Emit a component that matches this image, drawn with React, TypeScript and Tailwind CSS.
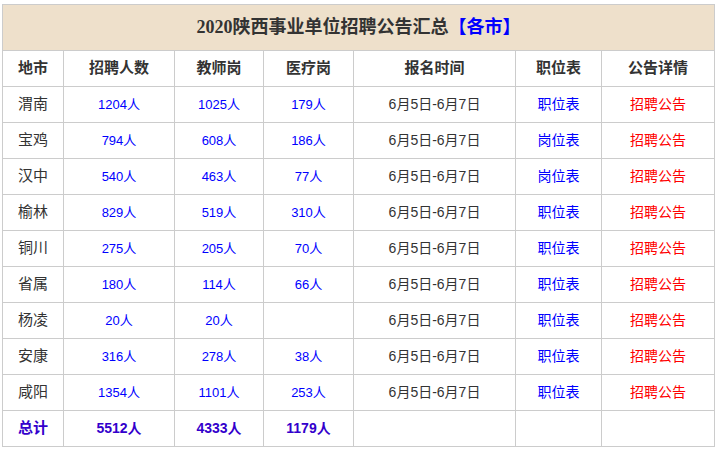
import React from 'react'

type Row = {
  city: string
  total: string
  teacher: string
  medical: string
  table: string
}

const rows: Row[] = [
  { city: '渭南', total: '1204人', teacher: '1025人', medical: '179人', table: '职位表' },
  { city: '宝鸡', total: '794人', teacher: '608人', medical: '186人', table: '岗位表' },
  { city: '汉中', total: '540人', teacher: '463人', medical: '77人', table: '岗位表' },
  { city: '榆林', total: '829人', teacher: '519人', medical: '310人', table: '职位表' },
  { city: '铜川', total: '275人', teacher: '205人', medical: '70人', table: '职位表' },
  { city: '省属', total: '180人', teacher: '114人', medical: '66人', table: '职位表' },
  { city: '杨凌', total: '20人', teacher: '20人', medical: '', table: '职位表' },
  { city: '安康', total: '316人', teacher: '278人', medical: '38人', table: '职位表' },
  { city: '咸阳', total: '1354人', teacher: '1101人', medical: '253人', table: '职位表' },
]

const headers = ['地市', '招聘人数', '教师岗', '医疗岗', '报名时间', '职位表', '公告详情']

const cell = 'border border-[#cccccc] text-center align-middle p-0'

export default function App() {
  return (
    <main
      className="w-[719px] h-[452px] bg-white pl-[2px] pt-[4px]"
      style={{ fontFamily: '"Liberation Sans", "Noto Sans CJK SC", sans-serif' }}
    >
      <table className="table-fixed border-collapse w-[712px] text-[#333333]">
        <colgroup>
          <col className="w-[61px]" />
          <col className="w-[111px]" />
          <col className="w-[89px]" />
          <col className="w-[90px]" />
          <col className="w-[162px]" />
          <col className="w-[86px]" />
          <col className="w-[113px]" />
        </colgroup>
        <thead>
          <tr className="h-[46px]">
            <th colSpan={7} className={`${cell} bg-[#eee0cb] text-[18px] font-bold text-[#333333]`}>
              <span style={{ fontFamily: '"Liberation Serif", "Noto Sans CJK SC", serif' }}>2020</span>
              陕西事业单位招聘公告汇总
              <span className="text-[#0000ff]">【各市】</span>
            </th>
          </tr>
          <tr className="h-[36px]">
            {headers.map(h => (
              <th key={h} className={`${cell} text-[15px] font-bold text-[#333333]`}>{h}</th>
            ))}
          </tr>
        </thead>
        <tbody>
          {rows.map(r => (
            <tr key={r.city} className="h-[36px]">
              <td className={`${cell} text-[15px]`}>{r.city}</td>
              <td className={`${cell} text-[13px] text-[#0000ff]`}>{r.total}</td>
              <td className={`${cell} text-[13px] text-[#0000ff]`}>{r.teacher}</td>
              <td className={`${cell} text-[13px] text-[#0000ff]`}>{r.medical}</td>
              <td className={`${cell} text-[14px]`}>6月5日-6月7日</td>
              <td className={`${cell} text-[14px] text-[#0000ff]`}>{r.table}</td>
              <td className={`${cell} text-[14px] text-[#ff0000]`}>招聘公告</td>
            </tr>
          ))}
          <tr className="h-[36px]">
            <td className={`${cell} text-[15px] font-bold text-[#3300cc]`}>总计</td>
            <td className={`${cell} text-[14px] font-bold text-[#3300cc]`}>5512人</td>
            <td className={`${cell} text-[14px] font-bold text-[#3300cc]`}>4333人</td>
            <td className={`${cell} text-[14px] font-bold text-[#3300cc]`}>1179人</td>
            <td className={cell}></td>
            <td className={cell}></td>
            <td className={cell}></td>
          </tr>
        </tbody>
      </table>
    </main>
  )
}
